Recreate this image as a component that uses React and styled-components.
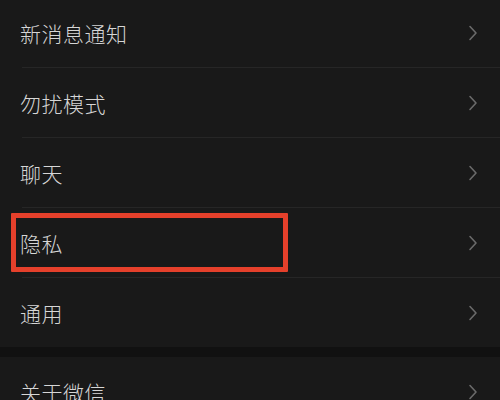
import React from "react";
import styled, { createGlobalStyle } from "styled-components";

const GlobalStyle = createGlobalStyle`
  html, body {
    margin: 0;
    padding: 0;
    background: #191919;
    overflow: hidden;
  }
`;

const Screen = styled.div`
  position: relative;
  width: 500px;
  height: 400px;
  overflow: hidden;
  background: #191919;
  font-family: "Noto Sans CJK SC", "Noto Sans", sans-serif;
`;

const Group = styled.div`
  display: flex;
  flex-direction: column;
  margin-top: ${(p) => p.offset || 0}px;
`;

const Row = styled.div`
  display: flex;
  align-items: center;
  justify-content: space-between;
  height: 69px;
  padding: 0 22px 0 20px;
  box-sizing: border-box;
  position: relative;

  &:not(:last-child)::after {
    content: "";
    position: absolute;
    left: 22px;
    right: 0;
    bottom: -1px;
    height: 1px;
    background: #262626;
  }
  &:not(:last-child) {
    margin-bottom: 1px;
  }
`;

const Label = styled.span`
  color: #d6d6d6;
  font-size: 21px;
  font-weight: 300;
  letter-spacing: 0.5px;
`;

const Gap = styled.div`
  height: 10px;
  background: #111111;
`;

const Highlight = styled.div`
  position: absolute;
  left: 11px;
  top: 213px;
  width: 277px;
  height: 59px;
  border: 5px solid #e5402b;
  box-sizing: border-box;
  border-radius: 1px;
`;

function Chevron() {
  return (
    <svg width="10" height="16" viewBox="0 0 10 16">
      <path
        d="M2 1.5 L8 8 L2 14.5"
        fill="none"
        stroke="#6a6a6a"
        strokeWidth="1.6"
        strokeLinecap="round"
        strokeLinejoin="round"
      />
    </svg>
  );
}

const first = ["新消息通知", "勿扰模式", "聊天", "隐私", "通用"];
const second = ["关于微信"];

export default function App() {
  return (
    <Screen>
      <GlobalStyle />
      <Group offset={-2}>
        {first.map((t) => (
          <Row key={t}>
            <Label>{t}</Label>
            <Chevron />
          </Row>
        ))}
      </Group>
      <Gap />
      <Group>
        {second.map((t) => (
          <Row key={t}>
            <Label>{t}</Label>
            <Chevron />
          </Row>
        ))}
      </Group>
      <Highlight />
    </Screen>
  );
}
